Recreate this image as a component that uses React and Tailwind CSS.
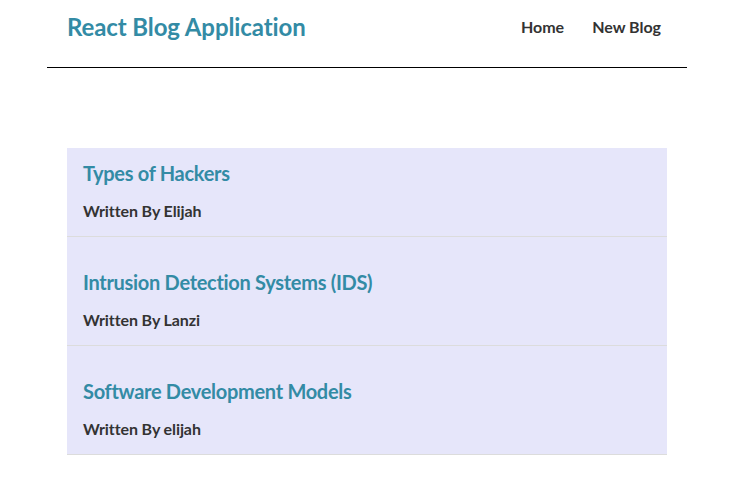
const blogs = [
  { id: 1, title: "Types of Hackers", author: "Elijah" },
  { id: 2, title: "Intrusion Detection Systems (IDS)", author: "Lanzi" },
  { id: 3, title: "Software Development Models", author: "elijah" },
];

function Navbar() {
  return (
    <nav className="flex items-center justify-between h-[68px] px-5 pb-[14px] border-b border-black">
      <h1 className="text-[24px] font-bold text-[#338ba5] tracking-[-0.1px]">React Blog Application</h1>
      <div className="flex text-[16px] font-bold text-[#333]">
        <a href="#" className="p-[6px] ml-4">Home</a>
        <a href="#" className="p-[6px] ml-4">New Blog</a>
      </div>
    </nav>
  );
}

export default function App() {
  return (
    <div className="min-h-[497px] bg-white font-['Lato',sans-serif]">
      <div className="w-[640px] ml-[47px]">
        <Navbar />
        <div className="w-[600px] mx-auto pt-[80px]">
          {blogs.map((blog, i) => (
            <div
              key={blog.id}
              className={
                "bg-[#e6e6fa] px-4 pb-[12px] border-b border-[#dcdcdc] " +
                (i === 0 ? "pt-[12px]" : "pt-[32px]")
              }
            >
              <h2 className="text-[20px] font-bold text-[#338ba5] leading-[26px] tracking-[-0.3px]">{blog.title}</h2>
              <p className="mt-[12px] text-[16px] font-bold text-[#333] leading-[26px] tracking-[-0.1px]">Written By {blog.author}</p>
            </div>
          ))}
        </div>
      </div>
    </div>
  );
}
